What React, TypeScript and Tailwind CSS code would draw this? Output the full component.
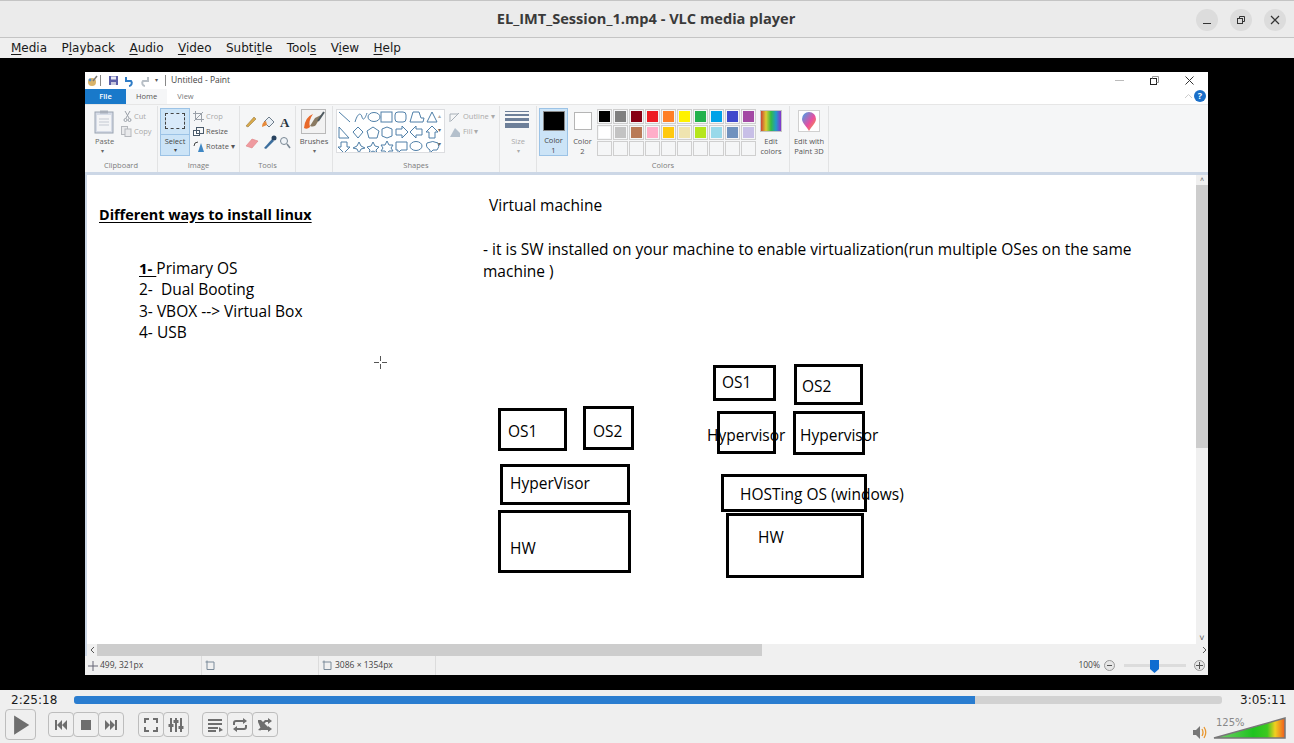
import React from 'react'

const menus = [
  { pre: '', key: 'M', post: 'edia' },
  { pre: 'P', key: 'l', post: 'ayback' },
  { pre: '', key: 'A', post: 'udio' },
  { pre: '', key: 'V', post: 'ideo' },
  { pre: 'Subti', key: 't', post: 'le' },
  { pre: 'Tool', key: 's', post: '' },
  { pre: 'V', key: 'i', post: 'ew' },
  { pre: '', key: 'H', post: 'elp' },
]

const paletteRows = [
  ['#000000', '#7f7f7f', '#880015', '#ed1c24', '#ff7f27', '#fff200', '#22b14c', '#00a2e8', '#3f48cc', '#a349a4'],
  ['#ffffff', '#c3c3c3', '#b97a57', '#ffaec9', '#ffc90e', '#efe4b0', '#b5e61d', '#99d9ea', '#7092be', '#c8bfe7'],
  ['#f5f6f7', '#f5f6f7', '#f5f6f7', '#f5f6f7', '#f5f6f7', '#f5f6f7', '#f5f6f7', '#f5f6f7', '#f5f6f7', '#f5f6f7'],
]

const boxes = [
  { left: 'left-[411px]', top: 'top-[233px]', size: 'w-[69px] h-[43px]' },
  { left: 'left-[496px]', top: 'top-[231px]', size: 'w-[51px] h-[44px]' },
  { left: 'left-[413px]', top: 'top-[289px]', size: 'w-[130px] h-[41px]' },
  { left: 'left-[411px]', top: 'top-[335px]', size: 'w-[133px] h-[63px]' },
  { left: 'left-[626px]', top: 'top-[190px]', size: 'w-[63px] h-[36px]' },
  { left: 'left-[707px]', top: 'top-[189px]', size: 'w-[69px] h-[41px]' },
  { left: 'left-[630px]', top: 'top-[236px]', size: 'w-[59px] h-[43px]' },
  { left: 'left-[706px]', top: 'top-[236px]', size: 'w-[72px] h-[44px]' },
  { left: 'left-[634px]', top: 'top-[299px]', size: 'w-[146px] h-[38px]' },
  { left: 'left-[639px]', top: 'top-[338px]', size: 'w-[138px] h-[65px]' },
]

const labels = [
  { text: 'OS1', cls: 'left-[421px] top-[246px]' },
  { text: 'OS2', cls: 'left-[506px] top-[246px]' },
  { text: 'HyperVisor', cls: 'left-[423px] top-[298px]' },
  { text: 'HW', cls: 'left-[423px] top-[363px]' },
  { text: 'OS1', cls: 'left-[635px] top-[197px]' },
  { text: 'OS2', cls: 'left-[715px] top-[201px]' },
  { text: 'Hypervisor', cls: 'left-[620px] top-[250px]' },
  { text: 'Hypervisor', cls: 'left-[713px] top-[250px]' },
  { text: 'HOSTing OS (windows)', cls: 'left-[653px] top-[309px]' },
  { text: 'HW', cls: 'left-[671px] top-[352px]' },
]

function Group({ width, label, children }: { width: string; label: string; children: React.ReactNode }) {
  return (
    <div className={`${width} h-full border-r border-[#e2e3e4] flex flex-col shrink-0`}>
      <div className="h-[56px] relative">{children}</div>
      <div className="text-center text-[7.5px] leading-[10px] text-[#7c7c7c] mt-[-2px]">{label}</div>
    </div>
  )
}

function CtlButton({ children }: { children: React.ReactNode }) {
  return (
    <div className="w-[26px] h-[25px] -ml-px first:ml-0 border border-[#bdbdbd] rounded-[4px] bg-[#f0f0f0] flex items-center justify-center">
      {children}
    </div>
  )
}

function MediaIcon({ d, size = 16 }: { d: string; size?: number }) {
  return (
    <svg width={size} height={size} viewBox="0 0 16 16" fill="#6e6e6e">
      <path d={d} />
    </svg>
  )
}

function ShapesIcons() {
  return (
    <svg width="110" height="44" viewBox="0 0 110 44" fill="none" stroke="#4f7fa8" strokeWidth="1">
      <path d="M2 2 L13 12" />
      <path d="M18 12 C21 2 24 3 25 7 C26 11 28 9 30 3" />
      <ellipse cx="37" cy="7" rx="6" ry="4.5" />
      <rect x="44" y="2" width="11" height="10" />
      <rect x="58" y="2" width="11" height="10" rx="3" />
      <path d="M73 12 L76 2 L82 2 L84 8 L87 8 L86 12 Z" />
      <path d="M90 12 L95 2 L100 12 Z" />
      <path d="M2 28 L2 17 L12 28 Z" />
      <path d="M21 17 L26 22 L21 28 L16 22 Z" />
      <path d="M36 17 L42 21 L40 28 L32 28 L30 21 Z" />
      <path d="M50 17 L55 19 L55 26 L50 28 L45 26 L45 19 Z" />
      <path d="M59 19 L65 19 L65 16 L71 22 L65 28 L65 25 L59 25 Z" />
      <path d="M85 19 L79 19 L79 16 L73 22 L79 28 L79 25 L85 25 Z" />
      <path d="M95 16 L101 22 L98 22 L98 28 L92 28 L92 22 L89 22 Z" />
      <path d="M4 32 L10 32 L10 37 L13 37 L7 43 L1 37 L4 37 Z" />
      <path d="M22 32 L24 36 L28 38 L24 39 L22 43 L20 39 L16 38 L20 36 Z" />
      <path d="M36 32 L38 36 L42 37 L39 40 L40 43 L36 41 L32 43 L33 40 L30 37 L34 36 Z" />
      <path d="M50 31 L52 35 L56 35 L54 38 L56 41 L52 41 L50 44 L48 41 L44 41 L46 38 L44 35 L48 35 Z" />
      <path d="M59 32 L70 32 L70 40 L64 40 L61 43 L61 40 L59 40 Z" />
      <ellipse cx="79" cy="36" rx="6" ry="4.5" />
      <path d="M90 33 Q96 30 101 33 Q103 37 100 40 L96 40 L93 43 L93 40 Q88 37 90 33 Z" />
    </svg>
  )
}

export default function App() {
  return (
    <div className="w-[1294px] h-[743px] flex flex-col overflow-hidden bg-black font-['Liberation_Sans',sans-serif]">
      {/* VLC title bar */}
      <div className="h-[38px] shrink-0 bg-[#ebebeb] border-t border-[#c4c4c4] border-b flex items-center relative">
        <div className="flex-1 text-center text-[14.6px] font-bold text-[#3a3a3a] font-['Open_Sans',sans-serif] pr-[2px]">
          EL_IMT_Session_1.mp4 - VLC media player
        </div>
        <div className="absolute right-[8px] top-[8px] flex gap-[12px]">
          <div className="w-[22px] h-[22px] rounded-full bg-[#dcdcdc] flex items-center justify-center">
            <div className="w-[8px] h-px bg-[#333] mt-[6px]" />
          </div>
          <div className="w-[22px] h-[22px] rounded-full bg-[#dcdcdc] flex items-center justify-center">
            <svg width="10" height="10" viewBox="0 0 10 10" fill="none" stroke="#333">
              <rect x="1.5" y="3.5" width="5" height="5" />
              <path d="M3.5 3.5 V1.5 H8.5 V6.5 H6.5" />
            </svg>
          </div>
          <div className="w-[22px] h-[22px] rounded-full bg-[#dcdcdc] flex items-center justify-center">
            <svg width="10" height="10" viewBox="0 0 10 10" fill="none" stroke="#333" strokeWidth="1.2">
              <path d="M1 1 L9 9 M9 1 L1 9" />
            </svg>
          </div>
        </div>
      </div>

      {/* VLC menu */}
      <div className="h-[20px] shrink-0 bg-[#efefef] flex items-center pl-[11px] gap-[14.4px] text-[12px] text-[#1a1a1a] font-['DejaVu_Sans',sans-serif]">
        {menus.map((m) => (
          <span key={m.pre + m.key}>
            {m.pre}
            <span className="underline underline-offset-2">{m.key}</span>
            {m.post}
          </span>
        ))}
      </div>

      {/* video area: the Paint window in the recording */}
      <div className="h-[632px] shrink-0 bg-black pt-[14px] pl-[85px]">
        <div className="w-[1123px] h-[603px] bg-white flex flex-col font-['Open_Sans',sans-serif]">
          {/* paint title */}
          <div className="h-[17px] shrink-0 flex items-center pl-[1px] relative text-[#444]">
            <svg width="12" height="12" viewBox="0 0 12 12">
              <circle cx="6" cy="7" r="4" fill="#d9b36a" />
              <circle cx="4" cy="5" r="1.4" fill="#4f8fc9" />
              <path d="M7 6 L11 1" stroke="#777" strokeWidth="1.5" />
            </svg>
            <div className="w-px h-[11px] bg-[#888] ml-[2px]" />
            <svg className="ml-[7px]" width="11" height="11" viewBox="0 0 11 11">
              <rect x="1" y="1" width="9" height="9" fill="#5b5fa8" />
              <rect x="3" y="1.5" width="5" height="3" fill="#e8e8f4" />
              <rect x="3" y="7" width="5" height="3" fill="#c8c8dc" />
            </svg>
            <svg className="ml-[4px]" width="12" height="12" viewBox="0 0 12 12" fill="none" stroke="#2e7cc6" strokeWidth="2">
              <path d="M3 2 V6 H8 A3 3 0 0 1 6 11" />
            </svg>
            <svg className="ml-[4px]" width="12" height="12" viewBox="0 0 12 12" fill="none" stroke="#b8bfc6" strokeWidth="2">
              <path d="M9 2 V6 H4 A3 3 0 0 0 6 11" />
            </svg>
            <span className="ml-[4px] text-[6px] text-[#555]">▾</span>
            <div className="w-px h-[11px] bg-[#888] ml-[7px]" />
            <span className="ml-[5px] text-[8.5px] leading-none">Untitled - Paint</span>
            <div className="absolute right-[14px] top-0 h-full flex items-center gap-[26px]">
              <div className="w-[9px] h-px bg-[#bbb]" />
              <svg width="9" height="9" viewBox="0 0 9 9" fill="none" stroke="#222">
                <rect x="0.5" y="2.5" width="6" height="6" />
                <path d="M2.5 2.5 V0.5 H8.5 V6.5 H6.5" stroke="#999" />
              </svg>
              <svg width="9" height="9" viewBox="0 0 9 9" fill="none" stroke="#333">
                <path d="M0.5 0.5 L8.5 8.5 M8.5 0.5 L0.5 8.5" />
              </svg>
            </div>
          </div>

          {/* tabs */}
          <div className="h-[16px] shrink-0 flex items-stretch relative border-b border-[#e6e6e6] text-[7.5px]">
            <div className="w-[41px] bg-[#1979ca] text-white flex items-center justify-center font-semibold">File</div>
            <div className="w-[41px] bg-[#f5f6f7] text-[#555] flex items-center justify-center">Home</div>
            <div className="w-[37px] text-[#777] flex items-center justify-center">View</div>
            <svg className="absolute right-[15px] top-[4px]" width="9" height="6" viewBox="0 0 9 6" fill="none" stroke="#ccc">
              <path d="M1 5 L4.5 1.5 L8 5" />
            </svg>
            <div className="absolute right-[2px] top-[1px] w-[12px] h-[12px] rounded-full bg-[#1a6fc9] text-white text-[9px] leading-[12px] text-center font-bold">?</div>
          </div>

          {/* ribbon */}
          <div className="h-[67px] shrink-0 bg-[#f5f6f7] flex text-[7.5px] text-[#666] leading-[10px] pt-[1px]">
            <Group width="w-[73px]" label="Clipboard">
              <svg className="absolute left-[9px] top-[4px]" width="20" height="24" viewBox="0 0 20 24">
                <rect x="1" y="2" width="18" height="21" fill="#d5dbe6" stroke="#9aa3b2" />
                <rect x="3" y="5" width="14" height="16" fill="#f3f4f6" />
                <path d="M5 9 H15 M5 12 H15 M5 15 H15" stroke="#c4c9d2" />
                <rect x="6" y="0.5" width="8" height="3" fill="#a8afbb" />
              </svg>
              <div className="absolute left-[10px] top-[30px]">Paste</div>
              <div className="absolute left-[16px] top-[40px] text-[6px]">▾</div>
              <svg className="absolute left-[38px] top-[5px]" width="9" height="11" viewBox="0 0 9 11" fill="none" stroke="#9aa0a8">
                <path d="M2 0 L6 7 M7 0 L3 7" />
                <circle cx="2.5" cy="9" r="1.5" />
                <circle cx="6.5" cy="9" r="1.5" />
              </svg>
              <div className="absolute left-[49px] top-[5px] text-[#aaa]">Cut</div>
              <svg className="absolute left-[36px] top-[20px]" width="11" height="11" viewBox="0 0 11 11" fill="#e9eaec" stroke="#b5b8bd">
                <rect x="0.5" y="0.5" width="6" height="8" />
                <rect x="4" y="3" width="6" height="7.5" />
              </svg>
              <div className="absolute left-[49px] top-[20px] text-[#aaa]">Copy</div>
            </Group>

            <Group width="w-[82px]" label="Image">
              <div className="absolute left-[2px] top-[2px] w-[30px] h-[48px] bg-[#cce4f7] border border-[#9cc3e6]">
                <div className="mx-auto mt-[4px] w-[20px] h-[16px] border border-dashed border-[#444] bg-[#d9eafa]" />
                <div className="mt-[5px] border-t border-[#9cc3e6] text-center text-[#444] pt-[1px]">Select</div>
                <div className="text-center text-[6px] text-[#444] leading-[8px]">▾</div>
              </div>
              <svg className="absolute left-[35px] top-[5px]" width="11" height="11" viewBox="0 0 11 11" fill="none" stroke="#9aa0a8">
                <rect x="2.5" y="2.5" width="6" height="6" />
                <path d="M0 2.5 H2.5 V0 M8.5 11 V8.5 H11 M1 10 L10 1" />
              </svg>
              <div className="absolute left-[48px] top-[5px] text-[#aaa]">Crop</div>
              <svg className="absolute left-[35px] top-[20px]" width="11" height="11" viewBox="0 0 11 11" fill="#fff" stroke="#4a5a6a">
                <rect x="0.5" y="4.5" width="6" height="5" />
                <rect x="3.5" y="1.5" width="7" height="6" fill="none" />
              </svg>
              <div className="absolute left-[48px] top-[20px] text-[#555]">Resize</div>
              <svg className="absolute left-[35px] top-[35px]" width="11" height="11" viewBox="0 0 11 11">
                <path d="M5 11 L11 11 L8 2 Z" fill="#3f87c4" />
                <path d="M1 5 A4 4 0 0 1 5 1" stroke="#444" fill="none" />
              </svg>
              <div className="absolute left-[48px] top-[35px] text-[#555] whitespace-nowrap">Rotate ▾</div>
            </Group>

            <Group width="w-[56px]" label="Tools">
              <svg className="absolute left-[5px] top-[8px]" width="46" height="36" viewBox="0 0 46 36">
                <path d="M1 12 L9 3 L11 5 L3 13 Z" fill="#d8a94a" stroke="#8a6a30" strokeWidth="0.5" />
                <path d="M19 8 L24 3 L29 8 L24 13 Z" fill="#e8eef4" stroke="#6d7c8a" />
                <path d="M17 13 Q17 8 21 7 L22 11 Z" fill="#e78a3a" />
                <text x="35" y="13" fontSize="13" fontWeight="700" fontFamily="Liberation Serif" fill="#26343f">A</text>
                <path d="M1 32 L7 25 L13 27 L7 34 Z" fill="#ef9aa0" stroke="#d77" strokeWidth="0.5" />
                <path d="M19 34 L27 25 L29 27 L21 35 Z" fill="#3d6f9e" />
                <circle cx="29" cy="24" r="2.5" fill="#27425f" />
                <circle cx="39" cy="27" r="3.5" fill="#f0f4f8" stroke="#7a8894" />
                <path d="M42 30 L45 34" stroke="#7a8894" strokeWidth="1.5" />
              </svg>
            </Group>

            <Group width="w-[37px]" label="">
              <svg className="absolute left-[5px] top-[3px]" width="25" height="25" viewBox="0 0 25 25">
                <rect x="0.5" y="0.5" width="24" height="24" fill="#f2f2f2" stroke="#b9b9b9" />
                <path d="M3 19 Q4 8 12 5 Q7 12 9 18 Q6 21 3 19 Z" fill="#e8692a" />
                <path d="M9 17 Q14 19 16 14 L22 5 L14 9 Z" fill="#8a7a62" />
                <path d="M17 12 L23 3" stroke="#4f5a60" strokeWidth="2" />
              </svg>
              <div className="absolute w-full text-center top-[30px] text-[#555]">Brushes</div>
              <div className="absolute w-full text-center top-[40px] text-[6px]">▾</div>
            </Group>

            <Group width="w-[167px]" label="Shapes">
              <div className="absolute left-[3px] top-[3px] w-[109px] h-[44px] bg-white border border-[#dcdde0] overflow-hidden">
                <ShapesIcons />
              </div>
              <div className="absolute left-[105px] top-[6px] flex flex-col gap-[6px] text-[6px] text-[#666] leading-[8px]">
                <span className="text-[#aaa]">▴</span>
                <span>▾</span>
                <span>▾</span>
              </div>
              <svg className="absolute left-[116px] top-[5px]" width="12" height="12" viewBox="0 0 12 12" fill="none" stroke="#a8b0b8">
                <path d="M1 11 L1 3 H9 M2 10 L10 2" />
              </svg>
              <div className="absolute left-[130px] top-[5px] text-[#aaa] whitespace-nowrap">Outline ▾</div>
              <svg className="absolute left-[116px] top-[20px]" width="12" height="12" viewBox="0 0 12 12" fill="#b4c0cc">
                <path d="M1 11 L6 2 L11 7 L11 11 Z" />
              </svg>
              <div className="absolute left-[130px] top-[20px] text-[#aaa] whitespace-nowrap">Fill ▾</div>
            </Group>

            <Group width="w-[37px]" label="">
              <div className="absolute left-[5px] top-[5px] w-[24px] flex flex-col gap-[2px]">
                <div className="h-px bg-[#6d7f99]" />
                <div className="h-[2px] bg-[#6d7f99]" />
                <div className="h-[3px] bg-[#6d7f99]" />
                <div className="h-[5px] bg-[#6d7f99]" />
              </div>
              <div className="absolute w-full text-center top-[30px] text-[#aaa]">Size</div>
              <div className="absolute w-full text-center top-[40px] text-[6px] text-[#aaa]">▾</div>
            </Group>

            <Group width="w-[253px]" label="Colors">
              <div className="absolute left-[2px] top-[2px] w-[29px] h-[48px] bg-[#cce4f7] border border-[#9cc3e6] flex flex-col items-center pt-[2px] text-[#444]">
                <div className="w-[22px] h-[22px] bg-black border border-[#8a8a8a]" />
                <div className="mt-[4px]">Color</div>
                <div>1</div>
              </div>
              <div className="absolute left-[31px] top-[2px] w-[29px] h-[48px] flex flex-col items-center pt-[4px] text-[#555]">
                <div className="w-[18px] h-[18px] bg-white border border-[#b5b5b5]" />
                <div className="mt-[6px]">Color</div>
                <div>2</div>
              </div>
              <div className="absolute left-[60px] top-[3px] flex flex-col gap-px">
                {paletteRows.map((row, i) => (
                  <div key={i} className="flex gap-px">
                    {row.map((c, j) => (
                      <div key={j} className="w-[15px] h-[15px] border border-[#cfcfcf] p-px bg-[#f5f6f7]">
                        <div className="w-full h-full" style={{ backgroundColor: c }} />
                      </div>
                    ))}
                  </div>
                ))}
              </div>
              <div className="absolute left-[223px] top-[4px] w-[22px] h-[22px] border border-[#c4c4c4] bg-[linear-gradient(90deg,#c43,#dc3,#3b4,#29c,#83c)]" />
              <div className="absolute left-[216px] w-[36px] text-center top-[30px] text-[#555]">
                Edit
                <br />
                colors
              </div>
            </Group>

            <Group width="w-[39px]" label="">
              <div className="absolute left-[8px] top-[4px] w-[22px] h-[22px] border border-[#d0d0d0] bg-white flex items-center justify-center">
                <svg width="14" height="19" viewBox="0 0 14 19">
                  <defs>
                    <linearGradient id="p3d" x1="0" y1="0" x2="1" y2="1">
                      <stop offset="0" stopColor="#39a8f0" />
                      <stop offset="0.55" stopColor="#e94fa0" />
                      <stop offset="1" stopColor="#f7a32a" />
                    </linearGradient>
                  </defs>
                  <path d="M7 0 A7 7 0 0 1 14 7 C14 11 9 15 7 19 C5 15 0 11 0 7 A7 7 0 0 1 7 0 Z" fill="url(#p3d)" />
                </svg>
              </div>
              <div className="absolute w-full text-center top-[30px] text-[#555]">
                Edit with
                <br />
                Paint 3D
              </div>
            </Group>
          </div>

          {/* canvas with scrollbars */}
          <div className="h-[484px] shrink-0 bg-[#ccd7e6] pt-[3px] pl-[2px] flex flex-col">
            <div className="flex-1 flex min-h-0">
              <div className="w-[1109px] bg-white relative text-[15.5px] leading-[21px] text-black">
                <div className="absolute left-[12px] top-[29px] text-[14.4px] font-bold underline underline-offset-2">Different ways to install linux</div>
                <div className="absolute left-[52px] top-[83px] flex flex-col leading-[21.3px]">
                  <div>
                    <span className="text-[15px] font-bold underline underline-offset-2">1- </span>Primary OS
                  </div>
                  <div>2-&nbsp; Dual Booting</div>
                  <div>3- VBOX --&gt; Virtual Box</div>
                  <div>4- USB</div>
                </div>
                <div className="absolute left-[402px] top-[20px]">Virtual machine</div>
                <div className="absolute left-[396px] top-[63px] w-[670px] leading-[22px]">
                  - it is SW installed on your machine to enable virtualization(run multiple OSes on the same machine )
                </div>
                {/* cursor */}
                <svg className="absolute left-[287px] top-[181px]" width="13" height="13" viewBox="0 0 13 13" fill="none" stroke="#555">
                  <path d="M6.5 0 V5 M6.5 8 V13 M0 6.5 H5 M8 6.5 H13" />
                </svg>
                {boxes.map((b, i) => (
                  <div key={i} className={`absolute ${b.left} ${b.top} ${b.size} border-[3px] border-black`} />
                ))}
                {labels.map((l, i) => (
                  <div key={i} className={`absolute ${l.cls}`}>{l.text}</div>
                ))}
              </div>
              {/* right scrollbar */}
              <div className="w-[12px] bg-[#f0f0f0] flex flex-col items-center">
                <div className="h-[10px] text-[7px] leading-[10px] text-[#666]">˄</div>
                <div className="w-full h-[263px] bg-[#cdcdcd]" />
                <div className="flex-1" />
                <div className="h-[12px] text-[9px] leading-[12px] text-[#555]">˅</div>
              </div>
            </div>
            <div className="h-[12px] shrink-0 bg-[#f0f0f0] flex items-center">
              <svg className="ml-[2px]" width="6" height="8" viewBox="0 0 6 8" fill="none" stroke="#555">
                <path d="M5 1 L2 4 L5 7" />
              </svg>
              <div className="ml-[2px] w-[667px] h-full bg-[#cdcdcd]" />
              <svg className="ml-[440px]" width="6" height="8" viewBox="0 0 6 8" fill="none" stroke="#555">
                <path d="M1 1 L4 4 L1 7" />
              </svg>
            </div>
          </div>

          {/* paint status bar */}
          <div className="h-[19px] shrink-0 bg-[#f0f0f0] flex items-center text-[8.5px] text-[#444] relative">
            <div className="w-[117px] h-full border-r border-[#dcdcdc] flex items-center pl-[3px] gap-[2px]">
              <svg width="10" height="10" viewBox="0 0 10 10" fill="none" stroke="#667">
                <path d="M5 0 V10 M0 5 H10" />
              </svg>
              499, 321px
            </div>
            <div className="w-[117px] h-full border-r border-[#dcdcdc] flex items-center pl-[3px]">
              <svg width="11" height="11" viewBox="0 0 11 11" fill="none" stroke="#7a8a99">
                <path d="M0.5 2 H9 V9.5 H2 V0.5" />
              </svg>
            </div>
            <div className="w-[117px] h-full border-r border-[#dcdcdc] flex items-center pl-[3px] gap-[2px]">
              <svg width="11" height="11" viewBox="0 0 11 11" fill="none" stroke="#7a8a99">
                <path d="M0.5 2 H9 V9.5 H2 V0.5" />
              </svg>
              3086 × 1354px
            </div>
            <div className="absolute right-[3px] top-0 h-full flex items-center">
              <span className="mr-[4px]">100%</span>
              <div className="w-[11px] h-[11px] rounded-full border border-[#999] bg-[#e6e6e6] flex items-center justify-center">
                <div className="w-[5px] h-px bg-[#555]" />
              </div>
              <div className="ml-[9px] w-[62px] h-[3px] bg-[#dcdcdc] relative">
                <svg className="absolute left-[26px] top-[-4px]" width="9" height="13" viewBox="0 0 9 13">
                  <path d="M0 0 H9 V9 L4.5 13 L0 9 Z" fill="#0f6cd0" />
                </svg>
              </div>
              <div className="ml-[8px] w-[11px] h-[11px] rounded-full border border-[#999] bg-[#e6e6e6] flex items-center justify-center relative">
                <div className="w-[7px] h-px bg-[#555]" />
                <div className="absolute w-px h-[7px] bg-[#555]" />
              </div>
            </div>
          </div>
        </div>
      </div>

      {/* VLC controls */}
      <div className="h-[53px] shrink-0 bg-[#efefef] flex flex-col font-['DejaVu_Sans',sans-serif]">
        <div className="h-[19px] flex items-center">
          <div className="w-[74px] pl-[11px] text-[12px] text-[#1a1a1a]">2:25:18</div>
          <div className="w-[1148px] h-[8px] rounded-[3px] bg-[#d2d2d2] overflow-hidden">
            <div className="w-[901px] h-full bg-[#2a7dd0]" />
          </div>
          <div className="flex-1 pl-[18px] text-[12px] text-[#1a1a1a]">3:05:11</div>
        </div>
        <div className="flex-1 flex items-start pl-[5px] relative">
          <div className="w-[31px] h-[31px] border border-[#bdbdbd] rounded-[4px] flex items-center justify-center">
            <MediaIcon size={22} d="M3 1 L14 8 L3 15 Z" />
          </div>
          <div className="flex ml-[12px] mt-[3px]">
            <CtlButton><MediaIcon d="M2 3 H4 V13 H2 Z M9 3 V13 L4 8 Z M14 3 V13 L9 8 Z" /></CtlButton>
            <CtlButton><MediaIcon d="M3 3 H13 V13 H3 Z" /></CtlButton>
            <CtlButton><MediaIcon d="M14 3 H12 V13 H14 Z M7 3 V13 L12 8 Z M2 3 V13 L7 8 Z" /></CtlButton>
          </div>
          <div className="flex ml-[14px] mt-[3px]">
            <CtlButton><MediaIcon d="M1 1 H6 V3 H3 V6 H1 Z M10 1 H15 V6 H13 V3 H10 Z M1 10 H3 V13 H6 V15 H1 Z M13 10 H15 V15 H10 V13 H13 Z" /></CtlButton>
            <CtlButton><MediaIcon d="M2 1 H4 V7 H5.5 V10 H4 V15 H2 V10 H0.5 V7 H2 Z M7 1 H9 V3 H10.5 V6 H9 V15 H7 V6 H5.5 V3 H7 Z M12 1 H14 V9 H15.5 V12 H14 V15 H12 V12 H10.5 V9 H12 Z" /></CtlButton>
          </div>
          <div className="flex ml-[13px] mt-[3px]">
            <CtlButton><MediaIcon d="M1 2 H15 V4 H1 Z M1 6 H15 V8 H1 Z M1 10 H11 V12 H1 Z M12 10 L16 13 L12 15 Z M1 13 H9 V15 H1 Z" /></CtlButton>
            <CtlButton><MediaIcon d="M4 3 H11 V1 L15 4 L11 7 V5 H4 Q3 5 3 6 V8 H1 V6 Q1 3 4 3 Z M12 13 H5 V15 L1 12 L5 9 V11 H12 Q13 11 13 10 V8 H15 V10 Q15 13 12 13 Z" /></CtlButton>
            <CtlButton><MediaIcon d="M1 3 H4 L12 11 H11 V9 L15 12 L11 15 V13 H3.5 L3 12 H4 L1 5 Z M11 1 L15 4 L11 7 V5 H9 L7.5 6.5 L6 5 L8 3 H11 Z M1 13 L4 10 L5.5 11.5 L3.5 13.5 Z" /></CtlButton>
          </div>
          <svg className="absolute left-[1192px] top-[16px]" width="16" height="15" viewBox="0 0 16 15">
            <path d="M1 5 H4 L8 1 V14 L4 10 H1 Z" fill="#777" />
            <path d="M10 4 Q12 7.5 10 11 M12 2 Q15.5 7.5 12 13" fill="none" stroke="#e8962e" strokeWidth="1.3" />
          </svg>
          <div className="absolute left-[1216px] top-[6px] text-[10px] text-[#888]">125%</div>
          <svg className="absolute left-[1213px] top-[8px]" width="74" height="24" viewBox="0 0 74 24">
            <defs>
              <linearGradient id="vol" x1="0" y1="0" x2="1" y2="0">
                <stop offset="0" stopColor="#7ccf72" />
                <stop offset="0.55" stopColor="#1fc31f" />
                <stop offset="0.75" stopColor="#3cc820" />
                <stop offset="0.86" stopColor="#f0d020" />
                <stop offset="1" stopColor="#f05a1e" />
              </linearGradient>
            </defs>
            <path d="M1 21 L72 1 V21 Z" fill="url(#vol)" stroke="#777" strokeWidth="1.5" />
          </svg>
        </div>
      </div>
    </div>
  )
}
